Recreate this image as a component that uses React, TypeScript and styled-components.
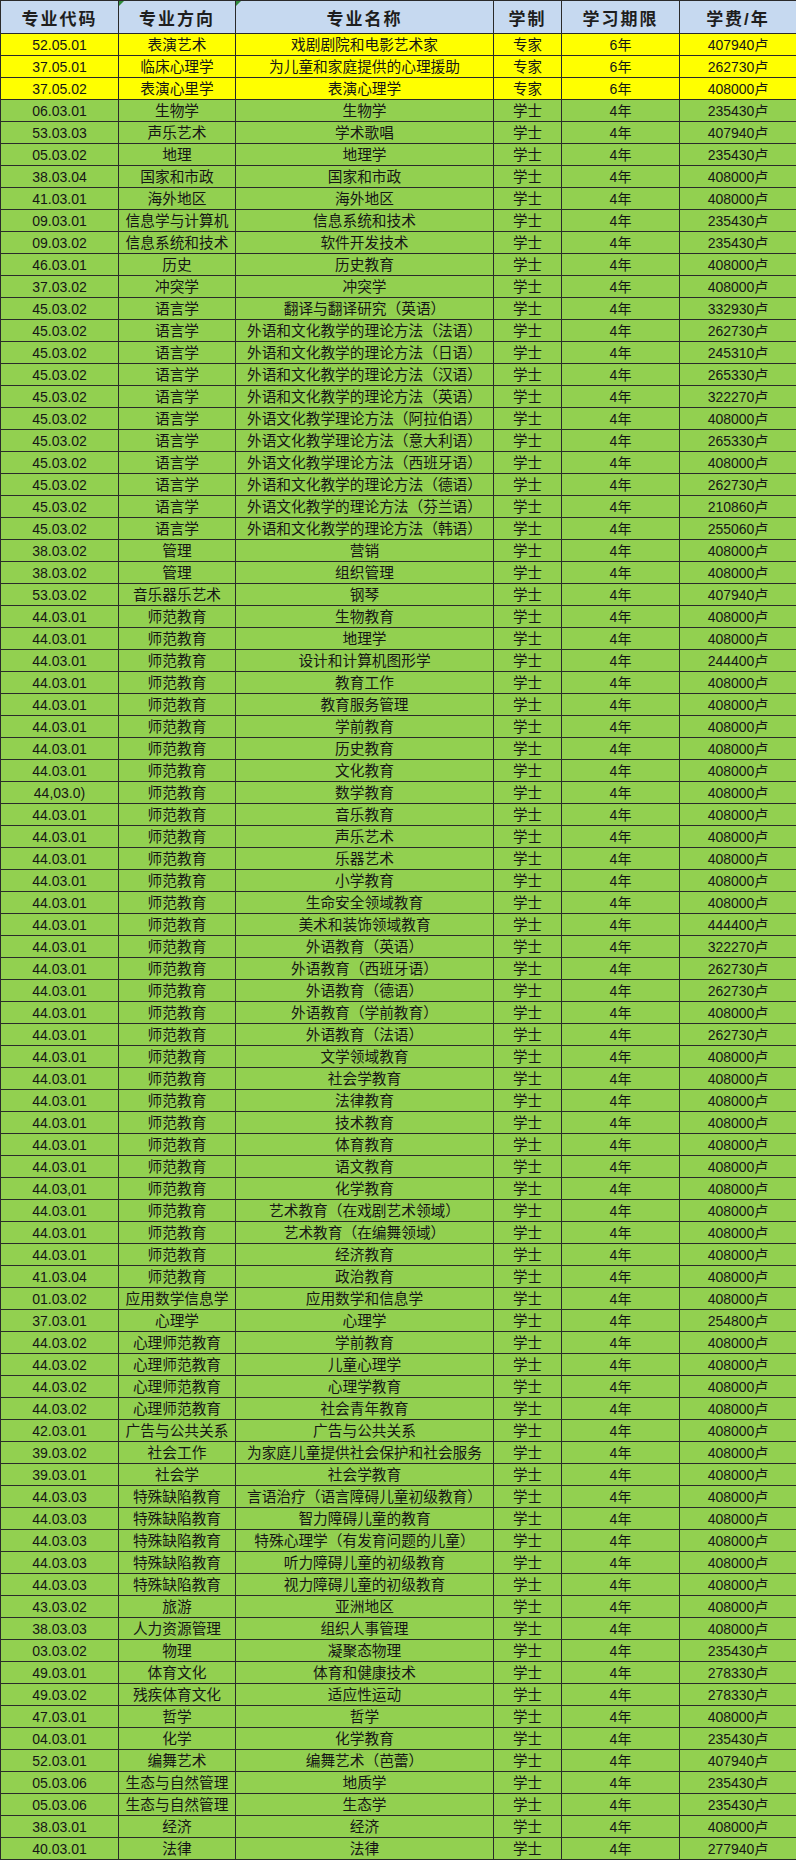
import React from "react";
import styled, { createGlobalStyle } from "styled-components";

const Global = createGlobalStyle`
  html, body { margin: 0; padding: 0; background: #ffffff; }
  body { font-family: "Liberation Sans", "Noto Sans CJK SC", sans-serif; }
`;

type Row = [string, string, string, string, string, string];

const rows: Row[] = [
  ["52.05.01", "表演艺术", "戏剧剧院和电影艺术家", "专家", "6年", "407940卢"],
  ["37.05.01", "临床心理学", "为儿童和家庭提供的心理援助", "专家", "6年", "262730卢"],
  ["37.05.02", "表演心里学", "表演心理学", "专家", "6年", "408000卢"],
  ["06.03.01", "生物学", "生物学", "学士", "4年", "235430卢"],
  ["53.03.03", "声乐艺术", "学术歌唱", "学士", "4年", "407940卢"],
  ["05.03.02", "地理", "地理学", "学士", "4年", "235430卢"],
  ["38.03.04", "国家和市政", "国家和市政", "学士", "4年", "408000卢"],
  ["41.03.01", "海外地区", "海外地区", "学士", "4年", "408000卢"],
  ["09.03.01", "信息学与计算机", "信息系统和技术", "学士", "4年", "235430卢"],
  ["09.03.02", "信息系统和技术", "软件开发技术", "学士", "4年", "235430卢"],
  ["46.03.01", "历史", "历史教育", "学士", "4年", "408000卢"],
  ["37.03.02", "冲突学", "冲突学", "学士", "4年", "408000卢"],
  ["45.03.02", "语言学", "翻译与翻译研究（英语）", "学士", "4年", "332930卢"],
  ["45.03.02", "语言学", "外语和文化教学的理论方法（法语）", "学士", "4年", "262730卢"],
  ["45.03.02", "语言学", "外语和文化教学的理论方法（日语）", "学士", "4年", "245310卢"],
  ["45.03.02", "语言学", "外语和文化教学的理论方法（汉语）", "学士", "4年", "265330卢"],
  ["45.03.02", "语言学", "外语和文化教学的理论方法（英语）", "学士", "4年", "322270卢"],
  ["45.03.02", "语言学", "外语文化教学理论方法（阿拉伯语）", "学士", "4年", "408000卢"],
  ["45.03.02", "语言学", "外语文化教学理论方法（意大利语）", "学士", "4年", "265330卢"],
  ["45.03.02", "语言学", "外语文化教学理论方法（西班牙语）", "学士", "4年", "408000卢"],
  ["45.03.02", "语言学", "外语和文化教学的理论方法（德语）", "学士", "4年", "262730卢"],
  ["45.03.02", "语言学", "外语文化教学的理论方法（芬兰语）", "学士", "4年", "210860卢"],
  ["45.03.02", "语言学", "外语和文化教学的理论方法（韩语）", "学士", "4年", "255060卢"],
  ["38.03.02", "管理", "营销", "学士", "4年", "408000卢"],
  ["38.03.02", "管理", "组织管理", "学士", "4年", "408000卢"],
  ["53.03.02", "音乐器乐艺术", "钢琴", "学士", "4年", "407940卢"],
  ["44.03.01", "师范教育", "生物教育", "学士", "4年", "408000卢"],
  ["44.03.01", "师范教育", "地理学", "学士", "4年", "408000卢"],
  ["44.03.01", "师范教育", "设计和计算机图形学", "学士", "4年", "244400卢"],
  ["44.03.01", "师范教育", "教育工作", "学士", "4年", "408000卢"],
  ["44.03.01", "师范教育", "教育服务管理", "学士", "4年", "408000卢"],
  ["44.03.01", "师范教育", "学前教育", "学士", "4年", "408000卢"],
  ["44.03.01", "师范教育", "历史教育", "学士", "4年", "408000卢"],
  ["44.03.01", "师范教育", "文化教育", "学士", "4年", "408000卢"],
  ["44,03.0)", "师范教育", "数学教育", "学士", "4年", "408000卢"],
  ["44.03.01", "师范教育", "音乐教育", "学士", "4年", "408000卢"],
  ["44.03.01", "师范教育", "声乐艺术", "学士", "4年", "408000卢"],
  ["44.03.01", "师范教育", "乐器艺术", "学士", "4年", "408000卢"],
  ["44.03.01", "师范教育", "小学教育", "学士", "4年", "408000卢"],
  ["44.03.01", "师范教育", "生命安全领域教育", "学士", "4年", "408000卢"],
  ["44.03.01", "师范教育", "美术和装饰领域教育", "学士", "4年", "444400卢"],
  ["44.03.01", "师范教育", "外语教育（英语）", "学士", "4年", "322270卢"],
  ["44.03.01", "师范教育", "外语教育（西班牙语）", "学士", "4年", "262730卢"],
  ["44.03.01", "师范教育", "外语教育（德语）", "学士", "4年", "262730卢"],
  ["44.03.01", "师范教育", "外语教育（学前教育）", "学士", "4年", "408000卢"],
  ["44.03.01", "师范教育", "外语教育（法语）", "学士", "4年", "262730卢"],
  ["44.03.01", "师范教育", "文学领域教育", "学士", "4年", "408000卢"],
  ["44.03.01", "师范教育", "社会学教育", "学士", "4年", "408000卢"],
  ["44.03.01", "师范教育", "法律教育", "学士", "4年", "408000卢"],
  ["44.03.01", "师范教育", "技术教育", "学士", "4年", "408000卢"],
  ["44.03.01", "师范教育", "体育教育", "学士", "4年", "408000卢"],
  ["44.03.01", "师范教育", "语文教育", "学士", "4年", "408000卢"],
  ["44.03,01", "师范教育", "化学教育", "学士", "4年", "408000卢"],
  ["44.03.01", "师范教育", "艺术教育（在戏剧艺术领域）", "学士", "4年", "408000卢"],
  ["44.03.01", "师范教育", "艺术教育（在编舞领域）", "学士", "4年", "408000卢"],
  ["44.03.01", "师范教育", "经济教育", "学士", "4年", "408000卢"],
  ["41.03.04", "师范教育", "政治教育", "学士", "4年", "408000卢"],
  ["01.03.02", "应用数学信息学", "应用数学和信息学", "学士", "4年", "408000卢"],
  ["37.03.01", "心理学", "心理学", "学士", "4年", "254800卢"],
  ["44.03.02", "心理师范教育", "学前教育", "学士", "4年", "408000卢"],
  ["44.03.02", "心理师范教育", "儿童心理学", "学士", "4年", "408000卢"],
  ["44.03.02", "心理师范教育", "心理学教育", "学士", "4年", "408000卢"],
  ["44.03.02", "心理师范教育", "社会青年教育", "学士", "4年", "408000卢"],
  ["42.03.01", "广告与公共关系", "广告与公共关系", "学士", "4年", "408000卢"],
  ["39.03.02", "社会工作", "为家庭儿童提供社会保护和社会服务", "学士", "4年", "408000卢"],
  ["39.03.01", "社会学", "社会学教育", "学士", "4年", "408000卢"],
  ["44.03.03", "特殊缺陷教育", "言语治疗（语言障碍儿童初级教育）", "学士", "4年", "408000卢"],
  ["44.03.03", "特殊缺陷教育", "智力障碍儿童的教育", "学士", "4年", "408000卢"],
  ["44.03.03", "特殊缺陷教育", "特殊心理学（有发育问题的儿童）", "学士", "4年", "408000卢"],
  ["44.03.03", "特殊缺陷教育", "听力障碍儿童的初级教育", "学士", "4年", "408000卢"],
  ["44.03.03", "特殊缺陷教育", "视力障碍儿童的初级教育", "学士", "4年", "408000卢"],
  ["43.03.02", "旅游", "亚洲地区", "学士", "4年", "408000卢"],
  ["38.03.03", "人力资源管理", "组织人事管理", "学士", "4年", "408000卢"],
  ["03.03.02", "物理", "凝聚态物理", "学士", "4年", "235430卢"],
  ["49.03.01", "体育文化", "体育和健康技术", "学士", "4年", "278330卢"],
  ["49.03.02", "残疾体育文化", "适应性运动", "学士", "4年", "278330卢"],
  ["47.03.01", "哲学", "哲学", "学士", "4年", "408000卢"],
  ["04.03.01", "化学", "化学教育", "学士", "4年", "235430卢"],
  ["52.03.01", "编舞艺术", "编舞艺术（芭蕾）", "学士", "4年", "407940卢"],
  ["05.03.06", "生态与自然管理", "地质学", "学士", "4年", "235430卢"],
  ["05.03.06", "生态与自然管理", "生态学", "学士", "4年", "235430卢"],
  ["38.03.01", "经济", "经济", "学士", "4年", "408000卢"],
  ["40.03.01", "法律", "法律", "学士", "4年", "277940卢"],
];

const headers = ["专业代码", "专业方向", "专业名称", "学制", "学习期限", "学费/年"];
const widths = [118, 117, 258, 68, 118, 117];
/* numeric columns use a slightly smaller size; CJK text columns a touch larger */
const sizes = [14, 14.7, 14.7, 14.5, 14, 14];

const Table = styled.table`
  width: 796px;
  table-layout: fixed;
  border-collapse: collapse;
  font-family: "Liberation Sans", "Noto Sans CJK SC", sans-serif;
  color: #161616;
`;

const HeadRow = styled.tr`
  height: 33px;
  background: #c6d9f0;
`;

const HeadCell = styled.th<{ $mark?: boolean }>`
  position: relative;
  border: 1px solid #2a2a2a;
  padding: 0;
  font-size: 17px;
  font-weight: 700;
  letter-spacing: 2px;
  text-align: center;
  vertical-align: middle;
  color: #1e1e1e;
  &::before {
    content: "";
    display: ${(p) => (p.$mark ? "block" : "none")};
    position: absolute;
    left: 0;
    top: 0;
    width: 0;
    height: 0;
    border-top: 5px solid #2e8b3a;
    border-right: 5px solid transparent;
  }
`;

const BodyRow = styled.tr<{ $tone: "yellow" | "green" }>`
  height: 22px;
  background: ${(p) => (p.$tone === "yellow" ? "#ffff00" : "#92d050")};
`;

const Cell = styled.td<{ $size: number }>`
  border: 1px solid #2a2a2a;
  padding: 0;
  font-size: ${(p) => p.$size}px;
  line-height: 20px;
  text-align: center;
  vertical-align: middle;
  white-space: nowrap;
  overflow: hidden;
`;

export default function App() {
  return (
    <>
      <Global />
      <Table>
        <colgroup>
          {widths.map((w, i) => (
            <col key={i} style={{ width: w }} />
          ))}
        </colgroup>
        <thead>
          <HeadRow>
            {headers.map((h, i) => (
              <HeadCell key={h} $mark={i === 1 || i === 2}>
                {h}
              </HeadCell>
            ))}
          </HeadRow>
        </thead>
        <tbody>
          {rows.map((r, i) => (
            <BodyRow key={i} $tone={i < 3 ? "yellow" : "green"}>
              {r.map((c, j) => (
                <Cell key={j} $size={sizes[j]}>
                  {c}
                </Cell>
              ))}
            </BodyRow>
          ))}
        </tbody>
      </Table>
    </>
  );
}
